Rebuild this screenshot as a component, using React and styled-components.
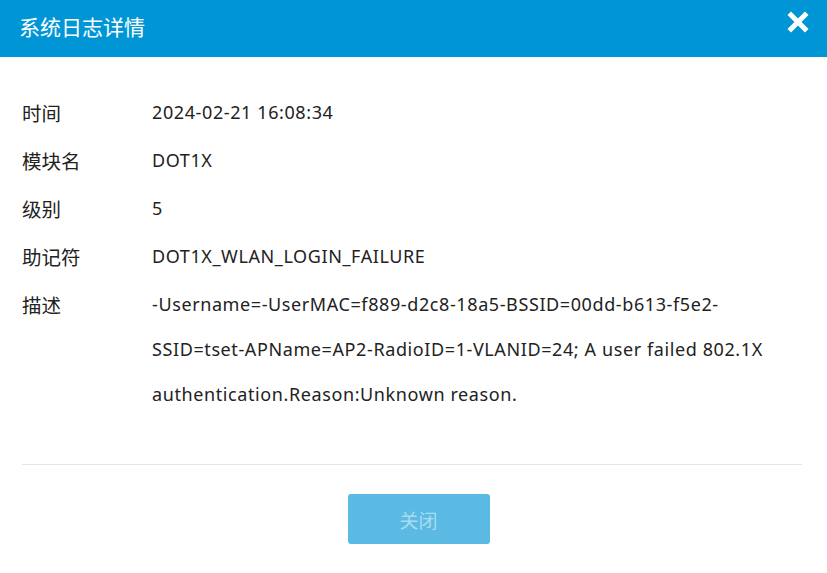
import React from 'react';
import styled, { createGlobalStyle } from 'styled-components';

const GlobalStyle = createGlobalStyle`
    html, body {
        margin: 0;
        padding: 0;
        background: #fff;
    }
    body {
        font-family: "Noto Sans", "Noto Sans CJK SC", sans-serif;
        color: #222;
    }
`;

// ===== 弹窗 =====
const Dialog = styled.div`
    width: 827px;
    height: 573px;
    background: #fff;
    display: flex;
    flex-direction: column;
`;

const Header = styled.div`
    height: 57px;
    background: #0096d6;
    display: flex;
    align-items: center;
    justify-content: space-between;
    padding: 0 18px 0 19px;
    box-sizing: border-box;
`;

const Title = styled.div`
    color: #fff;
    font-size: 21px;
    font-family: "Noto Sans CJK SC", sans-serif;
    margin-top: -6px;
`;

const CloseBtn = styled.button`
    border: 0;
    background: transparent;
    padding: 0;
    width: 22px;
    height: 22px;
    margin-top: -13px;
    cursor: pointer;
    display: flex;
`;

// ===== 内容 =====
const Body = styled.div`
    padding: 33px 22px 0 22px;
`;

const Row = styled.div`
    display: flex;
    font-size: 18px;
    line-height: 45px;
    margin-bottom: 3px;
`;

const Label = styled.div`
    width: 130px;
    flex-shrink: 0;
    font-size: 19.5px;
    font-family: "Noto Sans CJK SC", sans-serif;
`;

const Value = styled.div`
    width: 635px;
    letter-spacing: 0.6px;
`;

const Divider = styled.div`
    height: 1px;
    background: #e3e6e6;
    margin: 44px 25px 0 22px;
`;

const Footer = styled.div`
    display: flex;
    justify-content: center;
    padding: 29px 0 0 10px;
`;

const Button = styled.button`
    width: 142px;
    height: 50px;
    border: 0;
    border-radius: 3px;
    background: #5bbae3;
    color: #a9dcf1;
    font-size: 19px;
    font-family: "Noto Sans CJK SC", sans-serif;
`;

const rows = [
    ['时间', '2024-02-21 16:08:34'],
    ['模块名', 'DOT1X'],
    ['级别', '5'],
    ['助记符', 'DOT1X_WLAN_LOGIN_FAILURE'],
    ['描述', '-Username=-UserMAC=f889-d2c8-18a5-BSSID=00dd-b613-f5e2-SSID=tset-APName=AP2-RadioID=1-VLANID=24; A user failed 802.1X authentication.Reason:Unknown reason.'],
];

const App = () => {
    return (
        <Dialog>
            <GlobalStyle />
            <Header>
                <Title>系统日志详情</Title>
                <CloseBtn>
                    <svg width="22" height="22" viewBox="0 0 22 22">
                        <path d="M4 4 L18 18 M18 4 L4 18" stroke="#fff" strokeWidth="5" strokeLinecap="square" />
                    </svg>
                </CloseBtn>
            </Header>
            <Body>
                {rows.map(([k, v]) => (
                    <Row key={k}>
                        <Label>{k}</Label>
                        <Value>{v}</Value>
                    </Row>
                ))}
            </Body>
            <Divider />
            <Footer>
                <Button>关闭</Button>
            </Footer>
        </Dialog>
    );
};

export default App;
